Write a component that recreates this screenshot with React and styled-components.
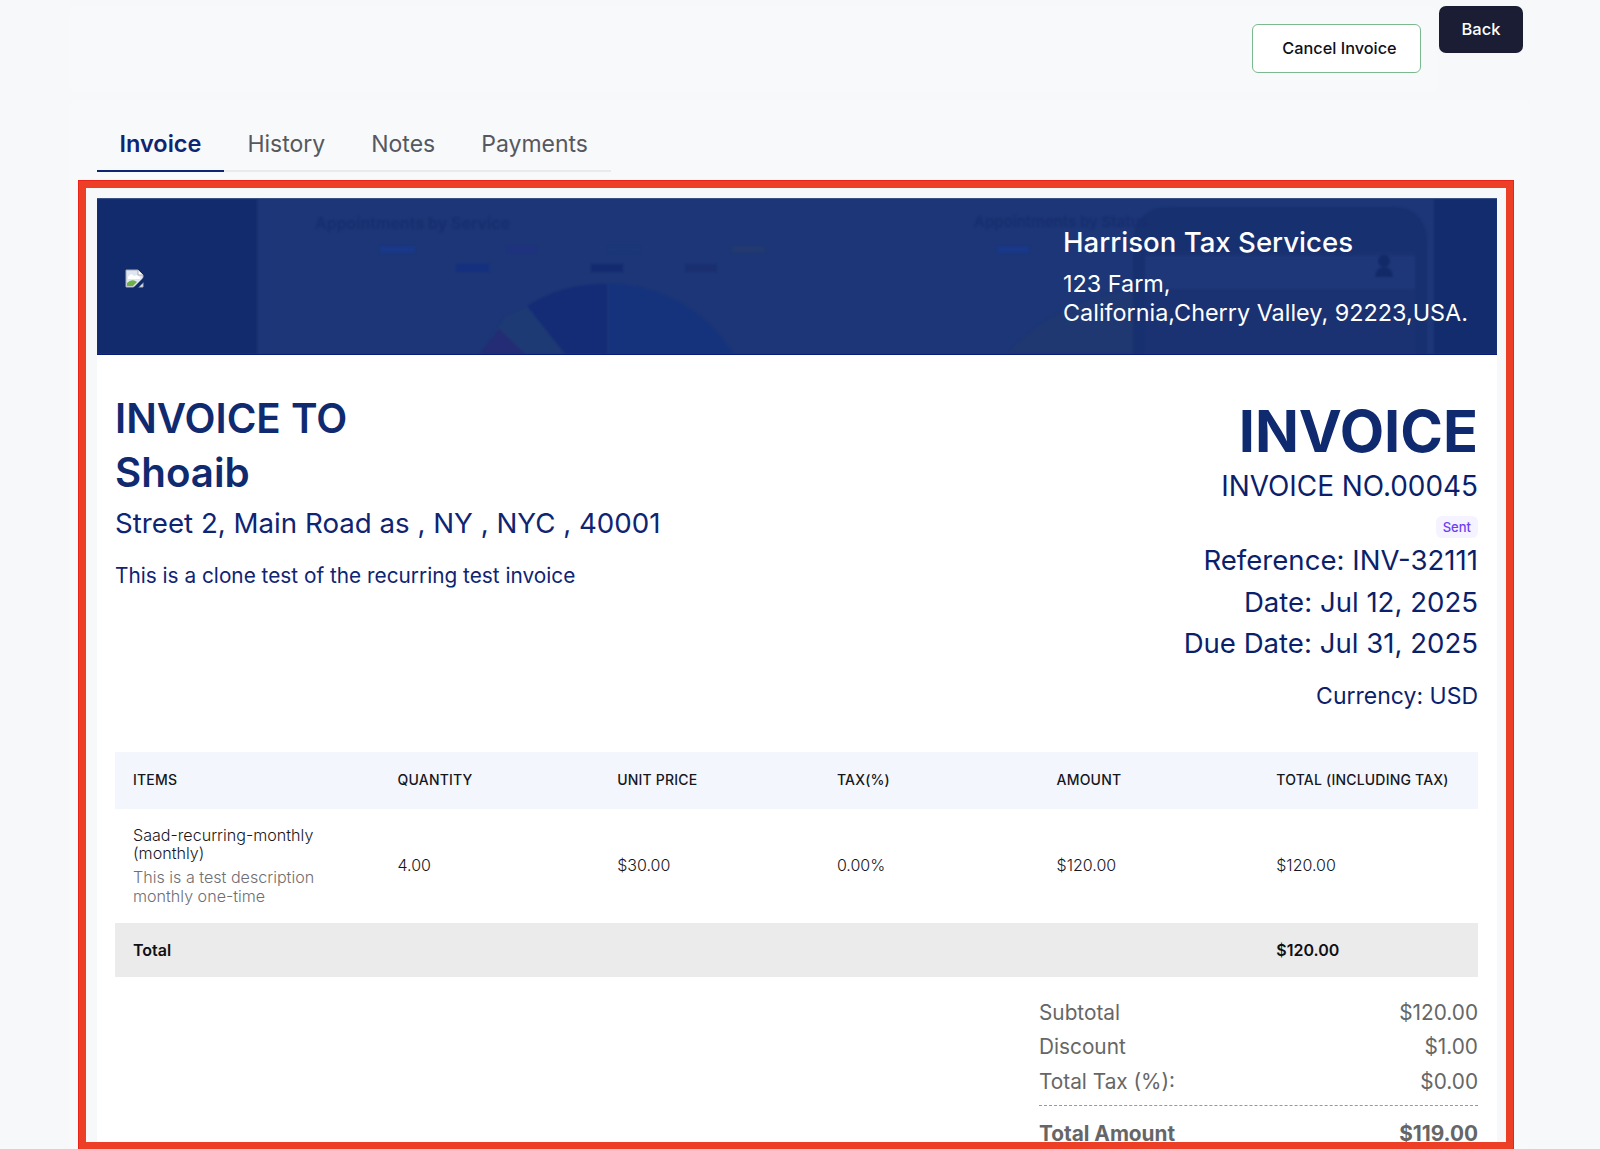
import styled, { createGlobalStyle } from 'styled-components';

const rows = [
  { label: 'Subtotal', value: '$120.00' },
  { label: 'Discount', value: '$1.00' },
  { label: 'Total Tax (%):', value: '$0.00' },
];

const tabs = ['Invoice', 'History', 'Notes', 'Payments'];
const columns = ['Items', 'Quantity', 'Unit Price', 'Tax(%)', 'Amount', 'Total (Including Tax)'];

const BannerArt = () => (
  <ArtSvg viewBox="0 0 1400 155" preserveAspectRatio="none">
    <rect x="0" y="0" width="160" height="155" fill="#122b6c" />
    <rect x="1337" y="0" width="63" height="155" fill="#132c6d" />
    <path d="M910 155 Q960 100 1040 90 L1040 155 Z" fill="#1f3872" />
    <path d="M1036 155 L1036 45 Q1036 8 1075 8 L1295 8 Q1330 8 1330 45 L1330 155 Z" fill="#17306f" />
    <rect x="1048" y="53" width="270" height="102" fill="#1a3272" />
    <rect x="1048" y="57" width="270" height="33" fill="#1e3778" />
    <circle cx="1287" cy="62" r="6" fill="#132a68" />
    <path d="M1278 78 q1 -10 9 -10 q8 0 9 10 Z" fill="#132a68" />
    <text x="218" y="30" fontSize="16" fontWeight="600" fill="#172e6e" fontFamily="Inter, sans-serif">
      Appointments by Service
    </text>
    <text x="877" y="28" fontSize="15" fontWeight="600" fill="#172e6e" fontFamily="Inter, sans-serif">
      Appointments by Status
    </text>
    <rect x="283" y="47" width="35" height="7" fill="#19388a" />
    <rect x="410" y="47" width="30" height="7" fill="#1f3280" />
    <rect x="511" y="47" width="32" height="7" fill="#1b3778" />
    <rect x="635" y="47" width="33" height="7" fill="#223a70" />
    <rect x="359" y="65" width="33" height="8" fill="#15307f" />
    <rect x="494" y="65" width="32" height="8" fill="#142a70" />
    <rect x="588" y="65" width="32" height="8" fill="#1a2f70" />
    <rect x="900" y="47" width="32" height="7" fill="#19388a" />
    <path d="M510 85 A146 146 0 0 0 430 107 L468 155 L510 155 Z" fill="#142c76" />
    <path d="M512 85 A146 146 0 0 1 636 155 L512 155 Z" fill="#15337d" />
    <path d="M430 107 L408 118 L384 155 L468 155 Z" fill="#1e3a74" />
    <path d="M402 130 L383 155 L428 155 Z" fill="#232c74" />
  </ArtSvg>
);

const BrokenImage = () => (
  <BrokenIcon viewBox="0 0 19 19">
    <path d="M1 1 H13 L18 6 V18 H1 Z" fill="#dfe6f2" stroke="#a9adb5" strokeWidth="1" />
    <path d="M13 1 V6 H18" fill="#fff" stroke="#a9adb5" strokeWidth="1" />
    <path d="M3 8 Q6 3 9 7 Q12 5 15 8 V10 H3 Z" fill="#fff" />
    <path d="M2 17 V14 Q7 9 12 13 L8 17 Z" fill="#6fb04a" />
    <path d="M19 8 L8 19 H13 L19 13 Z" fill="#122b6c" />
  </BrokenIcon>
);

const App = () => {
  return (
    <Page>
      <GlobalStyle />
      <TopRow>
        <TopPanel>
          <CancelButton>Cancel Invoice</CancelButton>
        </TopPanel>
        <BackButton>Back</BackButton>
      </TopRow>
      <ContentPanel>
        <TabList>
          {tabs.map((tab, i) => (
            <Tab key={tab} $active={i === 0}>
              {tab}
            </Tab>
          ))}
        </TabList>
        <Frame>
          <Banner>
            <BannerArt />
            <LogoSlot>
              <BrokenImage />
            </LogoSlot>
            <Company>
              <CompanyName>Harrison Tax Services</CompanyName>
              <CompanyAddress>
                123 Farm,
                <br />
                California,Cherry Valley, 92223,USA.
              </CompanyAddress>
            </Company>
          </Banner>
          <Sheet>
            <InfoRow>
              <BillTo>
                <BillHeading>INVOICE TO</BillHeading>
                <BillHeading>Shoaib</BillHeading>
                <BillAddress>Street 2, Main Road as , NY , NYC , 40001</BillAddress>
                <BillNote>This is a clone test of the recurring test invoice</BillNote>
              </BillTo>
              <InvoiceMeta>
                <InvoiceTitle>INVOICE</InvoiceTitle>
                <InvoiceNumber>INVOICE NO.00045</InvoiceNumber>
                <StatusPill>Sent</StatusPill>
                <MetaLine>Reference: INV-32111</MetaLine>
                <MetaLine>Date: Jul 12, 2025</MetaLine>
                <MetaLine>Due Date: Jul 31, 2025</MetaLine>
                <Currency>Currency: USD</Currency>
              </InvoiceMeta>
            </InfoRow>
            <TableHead>
              {columns.map((col) => (
                <HeadCell key={col}>{col}</HeadCell>
              ))}
            </TableHead>
            <TableRow>
              <ItemCell>
                <ItemName>Saad-recurring-monthly (monthly)</ItemName>
                <ItemDescription>This is a test description monthly one-time</ItemDescription>
              </ItemCell>
              <Cell>4.00</Cell>
              <Cell>$30.00</Cell>
              <Cell>0.00%</Cell>
              <Cell>$120.00</Cell>
              <Cell>$120.00</Cell>
            </TableRow>
            <TotalRow>
              <TotalCell>Total</TotalCell>
              <TotalCell />
              <TotalCell />
              <TotalCell />
              <TotalCell />
              <TotalCell>$120.00</TotalCell>
            </TotalRow>
            <Summary>
              {rows.map((row) => (
                <SummaryRow key={row.label}>
                  <span>{row.label}</span>
                  <span>{row.value}</span>
                </SummaryRow>
              ))}
              <SummaryTotal>
                <span>Total Amount</span>
                <span>$119.00</span>
              </SummaryTotal>
            </Summary>
          </Sheet>
        </Frame>
      </ContentPanel>
    </Page>
  );
};
export default App;

const GlobalStyle = createGlobalStyle`
  * {
    box-sizing: border-box;
  }
  html, body {
    margin: 0;
    height: 1149px;
    overflow: hidden;
    background: #f7f8fa;
    font-family: 'Inter', 'Liberation Sans', sans-serif;
  }
`;

const Page = styled.div`
  width: 1600px;
  height: 1149px;
  overflow: hidden;
  padding-top: 6px;
`;

const TopRow = styled.div`
  display: flex;
  align-items: flex-start;
  margin: 0 77px 0 69px;
`;

const TopPanel = styled.div`
  flex: 1;
  height: 86px;
  padding: 18px 17px 0 0;
  display: flex;
  justify-content: flex-end;
  background: #f8f9fb;
  border-radius: 8px;
`;

const CancelButton = styled.button`
  width: 169px;
  height: 49px;
  padding: 0 0 2px 6px;
  background: #fff;
  border: 1px solid #7cb98e;
  border-radius: 6px;
  color: #101018;
  font-family: inherit;
  font-size: 16.3px;
  font-weight: 500;
`;

const BackButton = styled.button`
  width: 84px;
  height: 47px;
  margin-left: 1px;
  padding: 0 0 2px;
  background: #1a1d33;
  border: none;
  border-radius: 7px;
  color: #fff;
  font-family: inherit;
  font-size: 16.5px;
  font-weight: 500;
`;

const ContentPanel = styled.section`
  width: 1461px;
  margin: 8px 0 0 69px;
  padding: 21px 16px 0 9px;
  background: #f8f9fb;
  border-radius: 8px;
`;

const TabList = styled.div`
  width: 514px;
  margin-left: 19px;
  display: flex;
  border-bottom: 2px solid #e9eaec;
`;

const Tab = styled.div`
  padding: 0 22.5px;
  height: 51px;
  line-height: 46px;
  margin-bottom: -2px;
  font-size: ${(p) => (p.$active ? '23.5px' : '23px')};
  font-weight: ${(p) => (p.$active ? 600 : 400)};
  color: ${(p) => (p.$active ? '#0f2472' : '#55585e')};
  border-bottom: 2px solid ${(p) => (p.$active ? '#0f2472' : 'transparent')};
  & + & {
    margin-left: 1px;
  }
`;

const Frame = styled.div`
  width: 1436px;
  height: 970px;
  margin-top: 8px;
  padding: 10px 9px 0 11px;
  border: 8px solid #ec3f26;
  outline: 1px solid #e8241a;
  outline-offset: -1px;
  background: #f7f8fa;
  overflow: hidden;
`;

const Banner = styled.div`
  position: relative;
  height: 157px;
  display: flex;
  align-items: center;
  justify-content: space-between;
  background: #1c3677;
  border-top: 1px solid #3a5088;
  border-bottom: 1px solid #0b1c78;
  overflow: hidden;
`;

const ArtSvg = styled.svg`
  position: absolute;
  inset: 0;
  width: 100%;
  height: 100%;
  filter: blur(0.9px);
`;

const LogoSlot = styled.div`
  position: relative;
  margin: 3px 0 0 28px;
`;

const BrokenIcon = styled.svg`
  display: block;
  width: 19px;
  height: 19px;
`;

const Company = styled.div`
  position: relative;
  width: 434px;
  padding-top: 5px;
  color: #fff;
`;

const CompanyName = styled.div`
  font-size: 27.6px;
  font-weight: 500;
  line-height: 22px;
  margin-bottom: 17px;
`;

const CompanyAddress = styled.div`
  font-size: 23.4px;
  line-height: 28.5px;
`;

const Sheet = styled.div`
  background: #fff;
  padding: 0 19px 0 18px;
`;

const InfoRow = styled.div`
  display: flex;
  justify-content: space-between;
  height: 397px;
  padding-top: 37px;
`;

const BillTo = styled.div`
  color: #0f2472;
`;

const BillHeading = styled.div`
  font-size: 40.3px;
  font-weight: 600;
  line-height: 54px;
  color: #102a70;
`;

const BillAddress = styled.div`
  font-size: 27.7px;
  line-height: 34px;
  margin-top: 6px;
`;

const BillNote = styled.div`
  font-size: 20.8px;
  line-height: 28px;
  margin-top: 22px;
`;

const InvoiceMeta = styled.div`
  display: flex;
  flex-direction: column;
  align-items: flex-end;
  color: #0c1f6b;
`;

const InvoiceTitle = styled.div`
  margin-top: 7px;
  font-size: 57.7px;
  font-weight: 700;
  line-height: 64px;
  color: #102a70;
`;

const InvoiceNumber = styled.div`
  font-size: 27.9px;
  line-height: 34px;
  margin-top: 6px;
`;

const StatusPill = styled.span`
  margin: 13px 0 2px;
  padding: 0 7px;
  height: 22px;
  line-height: 22px;
  border-radius: 6px;
  background: #f5f3ff;
  color: #6d3ff0;
  font-size: 13px;
  font-weight: 500;
`;

const MetaLine = styled.div`
  font-size: 27.6px;
  line-height: 41.5px;
`;

const Currency = styled.div`
  font-size: 23px;
  line-height: 30px;
  margin-top: 16px;
`;

const tableGrid = `
  display: grid;
  grid-template-columns: 264.5px repeat(5, 219.7px);
`;

const TableHead = styled.div`
  ${tableGrid}
  height: 57px;
  padding-bottom: 2px;
  align-items: center;
  background: #f3f6fd;
`;

const HeadCell = styled.div`
  padding-left: 18px;
  font-size: 14px;
  font-weight: 500;
  letter-spacing: 0.2px;
  color: #16161d;
  text-transform: uppercase;
`;

const TableRow = styled.div`
  ${tableGrid}
  height: 114px;
  align-items: center;
`;

const ItemCell = styled.div`
  padding-left: 18px;
  width: 215px;
`;

const ItemName = styled.div`
  font-size: 16.1px;
  font-weight: 300;
  line-height: 18px;
  color: #16161d;
`;

const ItemDescription = styled.div`
  margin-top: 6px;
  font-size: 16.1px;
  font-weight: 300;
  line-height: 19px;
  color: #6e6e73;
`;

const Cell = styled.div`
  padding: 0 0 2px 18px;
  font-size: 16px;
  font-weight: 300;
  color: #16161d;
`;

const TotalRow = styled.div`
  ${tableGrid}
  height: 54px;
  align-items: center;
  background: #ebebeb;
`;

const TotalCell = styled.div`
  padding-left: 18px;
  font-size: 16px;
  font-weight: 600;
  color: #101015;
`;

const Summary = styled.div`
  width: 439px;
  margin: 18.5px 0 0 auto;
  font-size: 20.8px;
  color: #666;
`;

const SummaryRow = styled.div`
  display: flex;
  justify-content: space-between;
  height: 34.5px;
  line-height: 34.5px;
`;

const SummaryTotal = styled.div`
  display: flex;
  justify-content: space-between;
  margin-top: 6px;
  padding-top: 11px;
  line-height: 34px;
  font-size: 20.8px;
  font-weight: 700;
  border-top: 1px dashed #999;
`;
